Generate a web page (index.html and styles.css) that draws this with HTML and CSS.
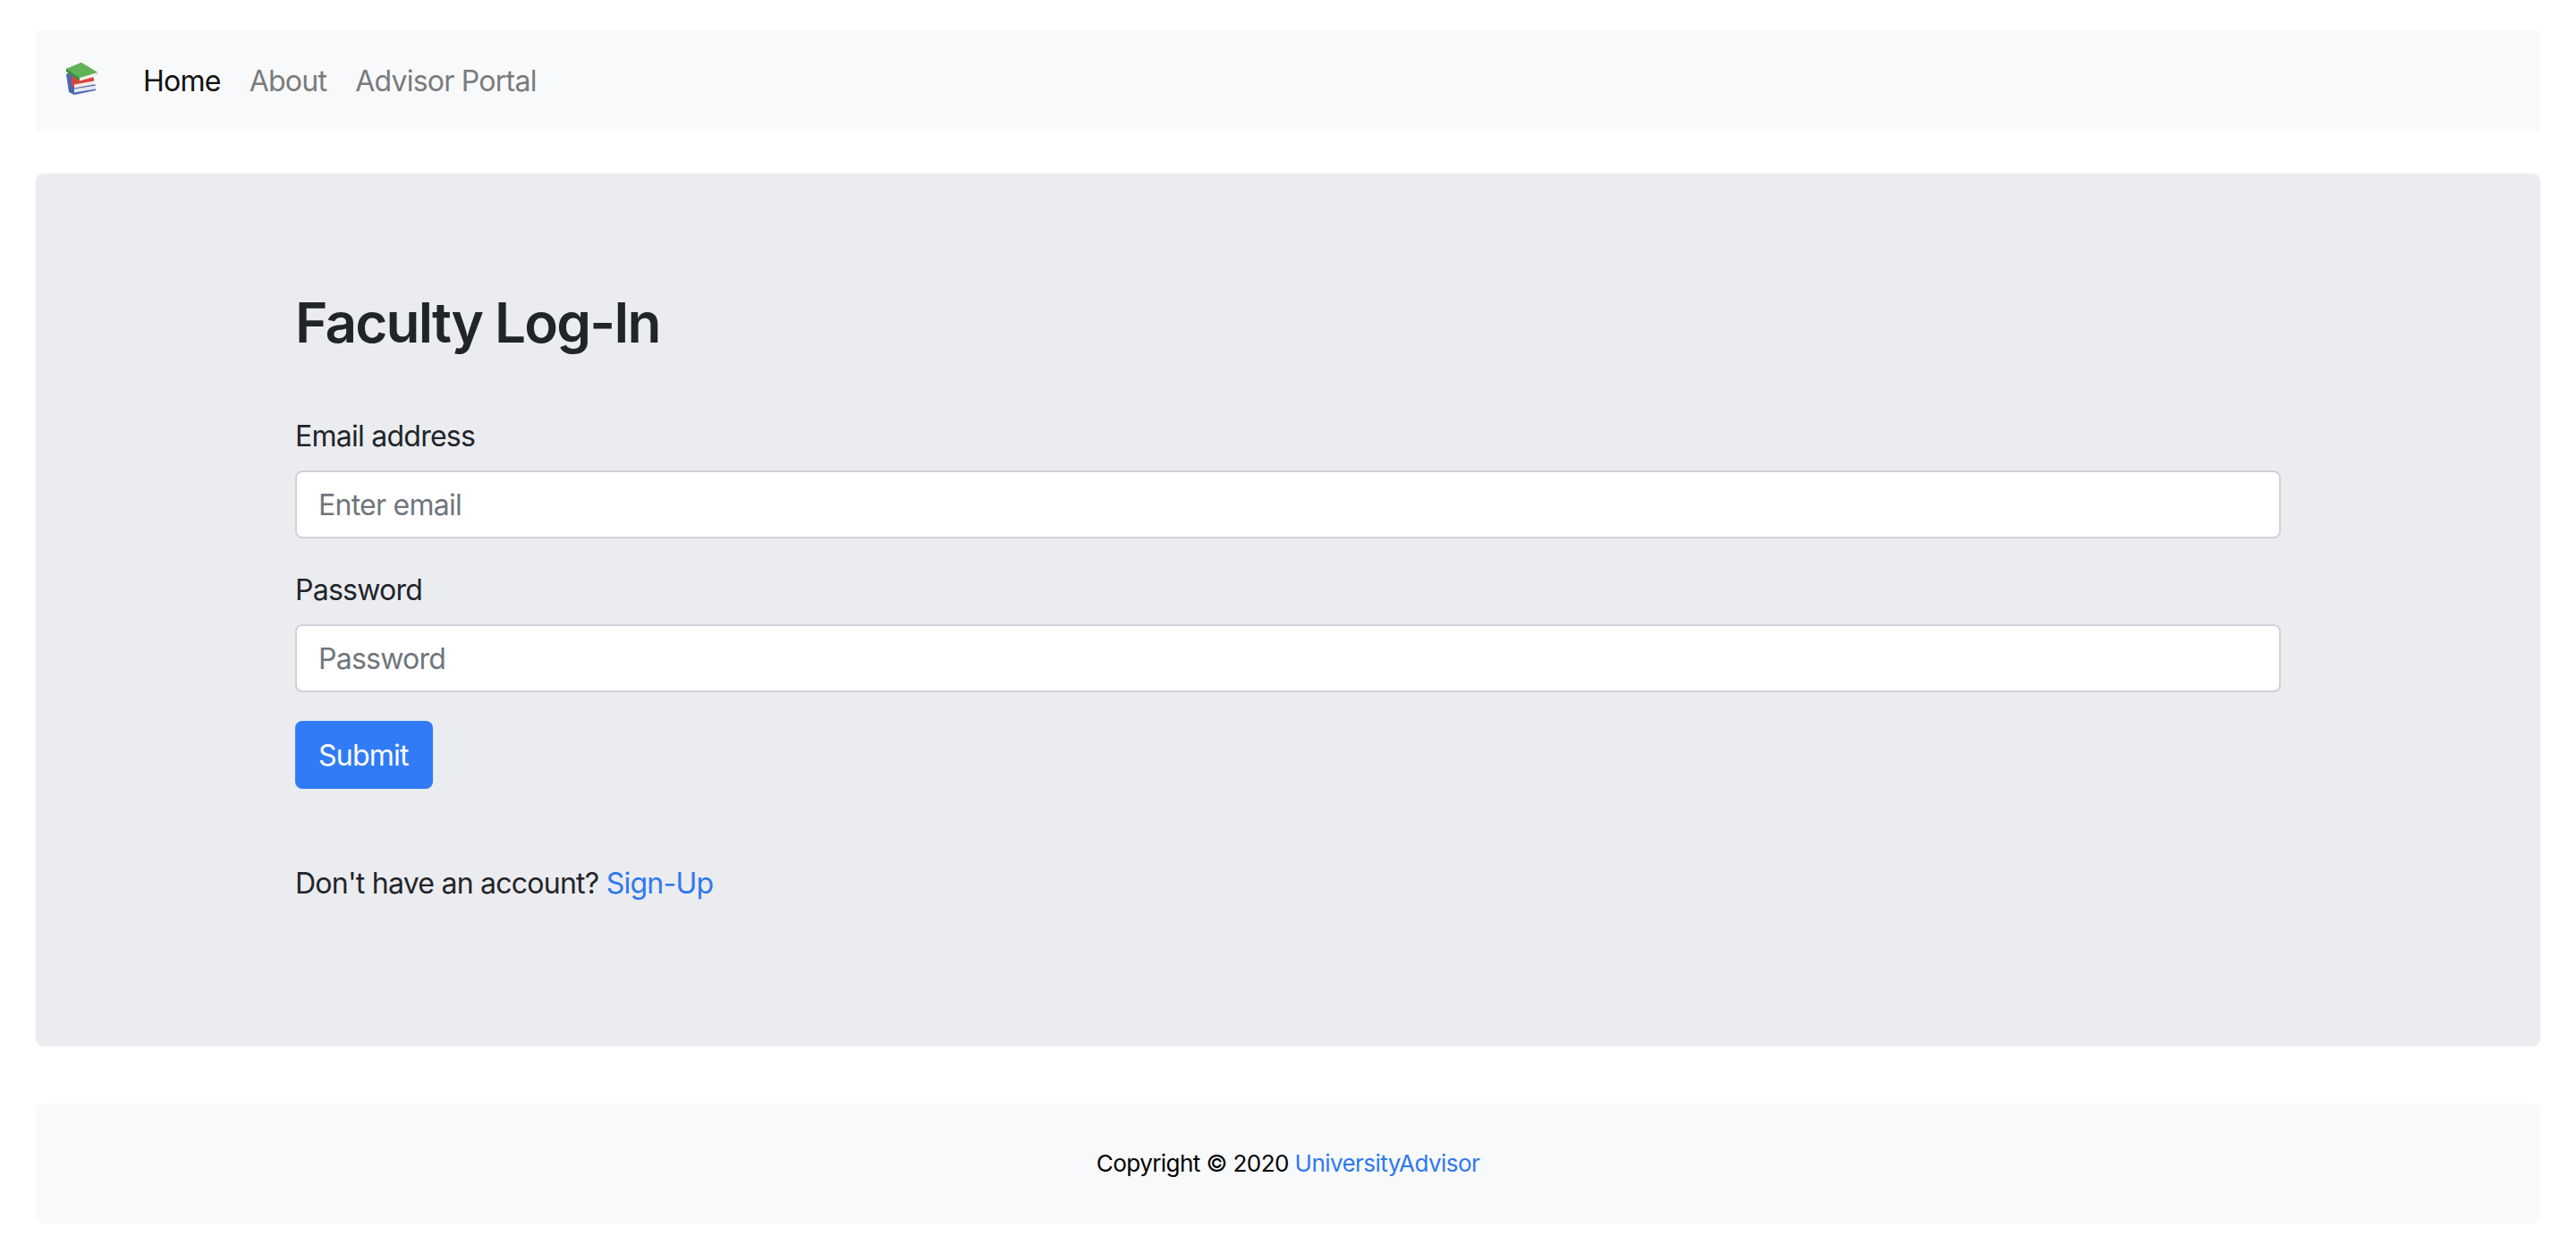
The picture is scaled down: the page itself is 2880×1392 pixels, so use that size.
FILE: index.html
```html
<!DOCTYPE html>
<html lang="en">
<head>
<meta charset="utf-8">
<title>Faculty Log-In</title>
<link rel="stylesheet" href="styles.css">
</head>
<body>
<nav class="navbar">
  <a class="brand" href="#" aria-label="UniversityAdvisor">
    <svg class="brand-icon" viewBox="0 0 36 36" width="36" height="36" aria-hidden="true">
      <path d="M0 13 L4 11 L33 25 L33 31 L9 36 L3 33 Z" fill="#4a68ad"/>
      <path d="M9 29.5 L33 25.5 L33 29.5 L9 33.5 Z" fill="#e6e8f0"/>
      <path d="M6 16 L28 13 L31 18 L31 24 L9 28.5 L6 25 Z" fill="#d9443a"/>
      <path d="M9 24.5 L31 20.5 L31 24.5 L9 28.5 Z" fill="#f3ece6"/>
      <path d="M0 7 L17 0 L35 11 L35 13 L15 20 L0 10 Z" fill="#5cab52"/>
      <path d="M0 7 L17 0 L35 11 L15 17 Z" fill="#62b157"/>
      <path d="M15 17 L35 11 L34 15 L15 20.5 Z" fill="#f1f3ea"/>
      <path d="M0 7 L15 17 L15 20.5 L0 10 Z" fill="#3f8c3d"/>
    </svg>
  </a>
  <ul class="nav-list">
    <li><a class="nav-link active" href="#">Home</a></li>
    <li><a class="nav-link" href="#">About</a></li>
    <li><a class="nav-link" href="#">Advisor Portal</a></li>
  </ul>
</nav>

<main class="jumbotron">
  <h1 class="title">Faculty Log-In</h1>
  <form class="login-form">
    <div class="form-group">
      <label class="form-label" for="email">Email address</label>
      <input class="form-control" id="email" type="email" placeholder="Enter email">
    </div>
    <div class="form-group">
      <label class="form-label" for="password">Password</label>
      <input class="form-control" id="password" type="password" placeholder="Password">
    </div>
    <button class="btn-submit" type="button">Submit</button>
  </form>
  <p class="signup">Don't have an account? <a class="link" href="#">Sign-Up</a></p>
</main>

<footer class="footer">
  <p class="copyright">Copyright © 2020 <a class="link" href="#">UniversityAdvisor</a></p>
</footer>
</body>
</html>
```

FILE: styles.css
```css
* {
  box-sizing: border-box;
}

html,
body {
  height: 100%;
}

body {
  margin: 0;
  padding: 34px 40px 24px;
  background: #fff;
  color: #212529;
  font-family: Inter, "Liberation Sans", sans-serif;
  font-size: 32px;
  letter-spacing: -0.75px;
  line-height: 48px;
}

a {
  text-decoration: none;
}

.navbar {
  display: flex;
  align-items: center;
  height: 112px;
  padding: 0 32px;
  margin-bottom: 48px;
  background: #f8f9fa;
}

.brand {
  display: flex;
  width: 72px;
  padding-left: 2px;
  margin-bottom: 4px;
}

.brand-icon {
  display: block;
}

.nav-list {
  display: flex;
  margin: 0;
  padding: 2px 0 0;
  list-style: none;
}

.nav-link {
  display: block;
  padding: 0 16px;
  color: #7a7b7c;
}

.nav-link.active {
  color: #111;
}

.jumbotron {
  height: 976px;
  padding: 128px 290px 0;
  background: #ebecf0;
  border-radius: 8px;
}

.title {
  margin: 0 0 63px;
  color: #212529;
  font-size: 62px;
  font-weight: 560;
  letter-spacing: -1.8px;
  line-height: 77px;
}

.form-group {
  margin-bottom: 32px;
}

.form-label {
  display: block;
  padding-top: 2px;
  margin-bottom: 14px;
}

.form-control {
  display: block;
  width: 100%;
  height: 76px;
  padding: 0 24px;
  background: #fff;
  border: 2px solid #cfd2d8;
  border-radius: 8px;
  color: #495057;
  font: inherit;
  letter-spacing: inherit;
  outline: none;
}

.form-control::placeholder {
  color: #6f757c;
  opacity: 1;
}

.btn-submit {
  display: block;
  height: 76px;
  padding: 2px 27px 0 26px;
  background: #317cf6;
  border: 0;
  border-radius: 8px;
  color: #fff;
  font: inherit;
  letter-spacing: inherit;
}

.signup {
  margin: 82px 0 0;
}

.link {
  color: #2f78ee;
}

.footer {
  display: flex;
  align-items: center;
  justify-content: center;
  height: 134px;
  margin-top: 64px;
  background: #f8f9fa;
  border-radius: 8px;
}

.copyright {
  margin: 0;
  color: #000;
  font-size: 26px;
  letter-spacing: -0.55px;
}
```
